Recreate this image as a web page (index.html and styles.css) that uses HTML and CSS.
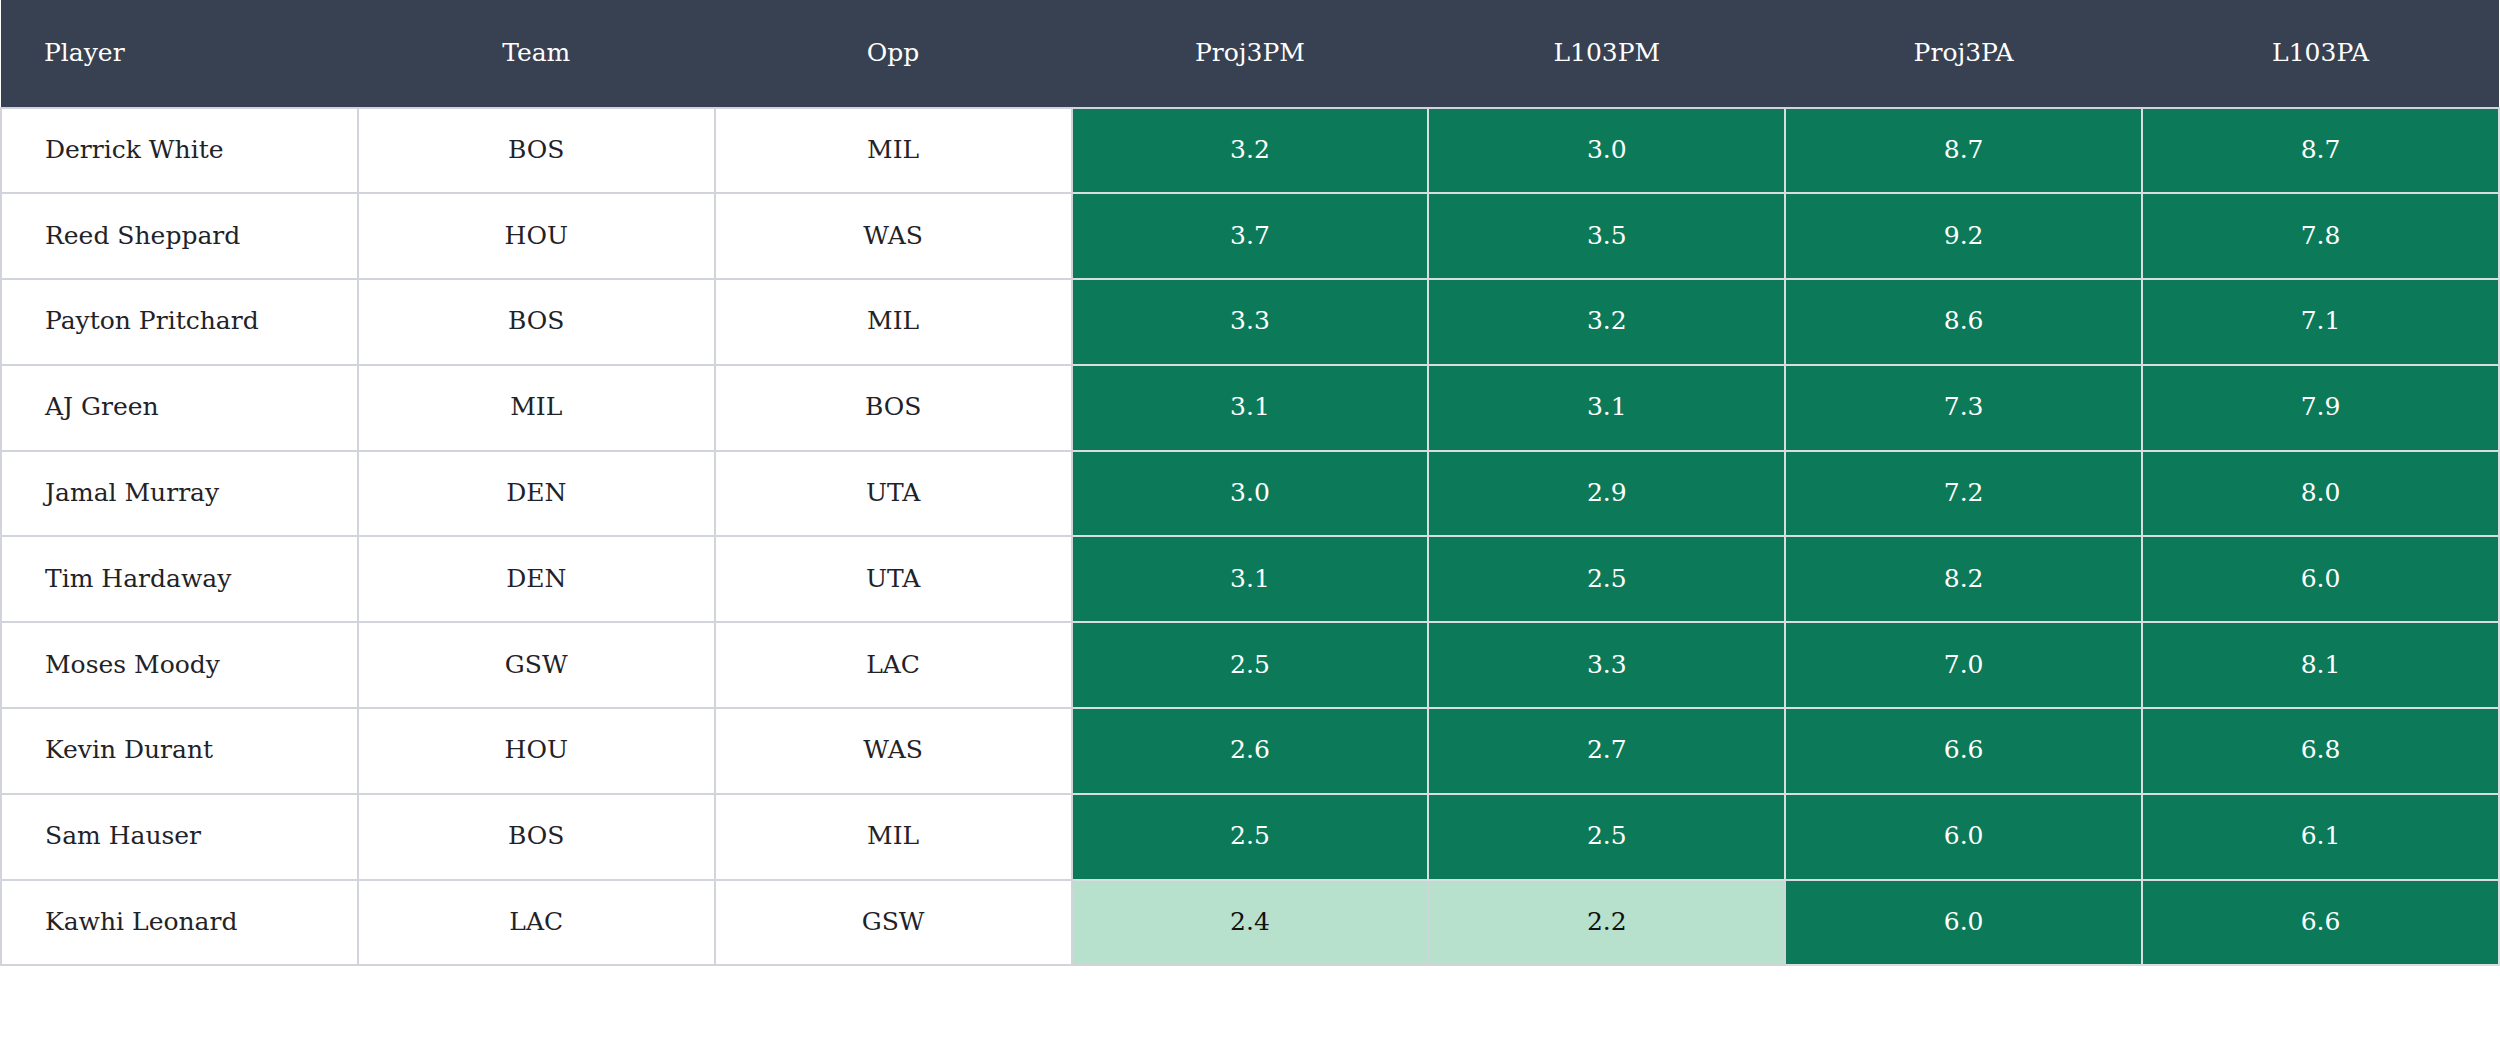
FILE: index.html
```html
<!DOCTYPE html>
<html lang="en">
<head>
<meta charset="utf-8">
<title>3PM Projections</title>
<link rel="stylesheet" href="styles.css">
</head>
<body>
<table class="stats">
  <thead>
    <tr>
      <th class="name">Player</th>
      <th>Team</th>
      <th>Opp</th>
      <th>Proj3PM</th>
      <th>L103PM</th>
      <th>Proj3PA</th>
      <th>L103PA</th>
    </tr>
  </thead>
  <tbody>
    <tr><td class="name">Derrick White</td><td>BOS</td><td>MIL</td><td class="hi">3.2</td><td class="hi">3.0</td><td class="hi">8.7</td><td class="hi">8.7</td></tr>
    <tr><td class="name">Reed Sheppard</td><td>HOU</td><td>WAS</td><td class="hi">3.7</td><td class="hi">3.5</td><td class="hi">9.2</td><td class="hi">7.8</td></tr>
    <tr><td class="name">Payton Pritchard</td><td>BOS</td><td>MIL</td><td class="hi">3.3</td><td class="hi">3.2</td><td class="hi">8.6</td><td class="hi">7.1</td></tr>
    <tr><td class="name">AJ Green</td><td>MIL</td><td>BOS</td><td class="hi">3.1</td><td class="hi">3.1</td><td class="hi">7.3</td><td class="hi">7.9</td></tr>
    <tr><td class="name">Jamal Murray</td><td>DEN</td><td>UTA</td><td class="hi">3.0</td><td class="hi">2.9</td><td class="hi">7.2</td><td class="hi">8.0</td></tr>
    <tr><td class="name">Tim Hardaway</td><td>DEN</td><td>UTA</td><td class="hi">3.1</td><td class="hi">2.5</td><td class="hi">8.2</td><td class="hi">6.0</td></tr>
    <tr><td class="name">Moses Moody</td><td>GSW</td><td>LAC</td><td class="hi">2.5</td><td class="hi">3.3</td><td class="hi">7.0</td><td class="hi">8.1</td></tr>
    <tr><td class="name">Kevin Durant</td><td>HOU</td><td>WAS</td><td class="hi">2.6</td><td class="hi">2.7</td><td class="hi">6.6</td><td class="hi">6.8</td></tr>
    <tr><td class="name">Sam Hauser</td><td>BOS</td><td>MIL</td><td class="hi">2.5</td><td class="hi">2.5</td><td class="hi">6.0</td><td class="hi">6.1</td></tr>
    <tr><td class="name">Kawhi Leonard</td><td>LAC</td><td>GSW</td><td class="mid">2.4</td><td class="mid">2.2</td><td class="hi">6.0</td><td class="hi">6.6</td></tr>
  </tbody>
</table>
</body>
</html>
```
FILE: styles.css
```css
html, body {
  margin: 0;
  padding: 0;
  background: #ffffff;
}

body {
  font-family: Georgia, "DejaVu Serif", "Liberation Serif", serif;
  color: #1f2328;
}

.stats {
  width: 2500px;
  border-collapse: collapse;
  table-layout: fixed;
}

.stats th {
  height: 104.5px;
  padding: 0 0 2px 0;
  background: #374151;
  color: #ffffff;
  font-weight: 400;
  font-size: 25px;
  text-align: center;
  border: none;
  border-bottom: 2px solid #d1d5db;
}

.stats td {
  height: 81.8px;
  padding: 0 0 2px 0;
  font-size: 25px;
  text-align: center;
  border: 2px solid #d1d5db;
}

.stats .name {
  text-align: left;
  padding-left: 43px;
}

.stats td.hi {
  background: #0c7a58;
  color: #ffffff;
  border-color: #d9dde0;
}

.stats td.mid {
  background: #b7e1cd;
  color: #111111;
  border-color: #d0d4d8;
}
```
